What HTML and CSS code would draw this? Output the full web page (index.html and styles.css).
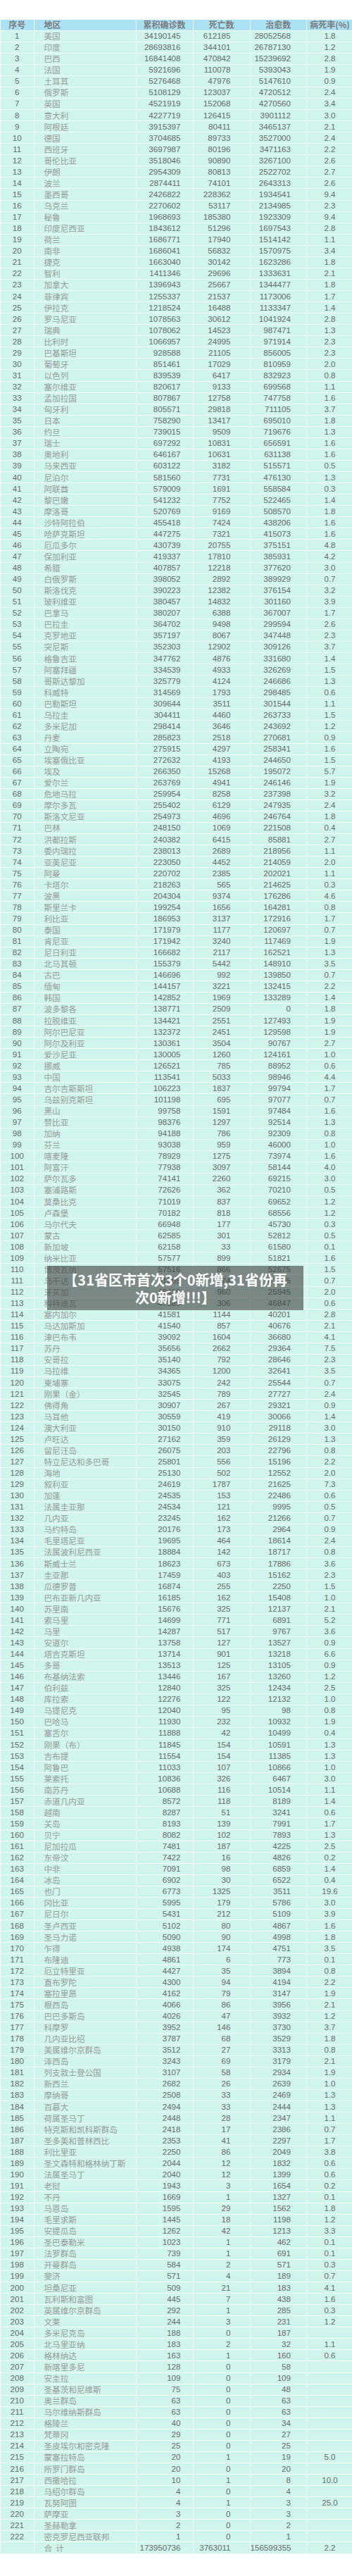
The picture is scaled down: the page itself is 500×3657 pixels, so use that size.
FILE: index.html
```html
<!DOCTYPE html>
<html lang="zh-CN">
<head>
<meta charset="utf-8">
<title>全球疫情统计</title>
<link rel="stylesheet" href="styles.css">
</head>
<body>
<div class="page">
<table class="stats">
<colgroup><col class="c-no"><col class="c-area"><col class="c-num"><col class="c-num"><col class="c-rec"><col class="c-rate"></colgroup>
<thead>
<tr><th>序号</th><th>地区</th><th>累积确诊数</th><th>死亡数</th><th>治愈数</th><th>病死率(%)</th></tr>
</thead>
<tbody>
<tr><td>1</td><td>美国</td><td>34190145</td><td>612185</td><td>28052568</td><td>1.8</td></tr>
<tr><td>2</td><td>印度</td><td>28693816</td><td>344101</td><td>26787130</td><td>1.2</td></tr>
<tr><td>3</td><td>巴西</td><td>16841408</td><td>470842</td><td>15239692</td><td>2.8</td></tr>
<tr><td>4</td><td>法国</td><td>5921696</td><td>110078</td><td>5393043</td><td>1.9</td></tr>
<tr><td>5</td><td>土耳其</td><td>5276468</td><td>47976</td><td>5147610</td><td>0.9</td></tr>
<tr><td>6</td><td>俄罗斯</td><td>5108129</td><td>123037</td><td>4720512</td><td>2.4</td></tr>
<tr><td>7</td><td>英国</td><td>4521919</td><td>152068</td><td>4270560</td><td>3.4</td></tr>
<tr><td>8</td><td>意大利</td><td>4227719</td><td>126415</td><td>3901112</td><td>3.0</td></tr>
<tr><td>9</td><td>阿根廷</td><td>3915397</td><td>80411</td><td>3465137</td><td>2.1</td></tr>
<tr><td>10</td><td>德国</td><td>3704685</td><td>89733</td><td>3527000</td><td>2.4</td></tr>
<tr><td>11</td><td>西班牙</td><td>3697987</td><td>80196</td><td>3471163</td><td>2.2</td></tr>
<tr><td>12</td><td>哥伦比亚</td><td>3518046</td><td>90890</td><td>3267100</td><td>2.6</td></tr>
<tr><td>13</td><td>伊朗</td><td>2954309</td><td>80813</td><td>2522702</td><td>2.7</td></tr>
<tr><td>14</td><td>波兰</td><td>2874411</td><td>74101</td><td>2643313</td><td>2.6</td></tr>
<tr><td>15</td><td>墨西哥</td><td>2426822</td><td>228362</td><td>1934541</td><td>9.4</td></tr>
<tr><td>16</td><td>乌克兰</td><td>2270602</td><td>53117</td><td>2134985</td><td>2.3</td></tr>
<tr><td>17</td><td>秘鲁</td><td>1968693</td><td>185380</td><td>1923309</td><td>9.4</td></tr>
<tr><td>18</td><td>印度尼西亚</td><td>1843612</td><td>51296</td><td>1697543</td><td>2.8</td></tr>
<tr><td>19</td><td>荷兰</td><td>1686771</td><td>17940</td><td>1514142</td><td>1.1</td></tr>
<tr><td>20</td><td>南非</td><td>1686041</td><td>56832</td><td>1570975</td><td>3.4</td></tr>
<tr><td>21</td><td>捷克</td><td>1663040</td><td>30142</td><td>1623286</td><td>1.8</td></tr>
<tr><td>22</td><td>智利</td><td>1411346</td><td>29696</td><td>1333631</td><td>2.1</td></tr>
<tr><td>23</td><td>加拿大</td><td>1396943</td><td>25667</td><td>1344477</td><td>1.8</td></tr>
<tr><td>24</td><td>菲律宾</td><td>1255337</td><td>21537</td><td>1173006</td><td>1.7</td></tr>
<tr><td>25</td><td>伊拉克</td><td>1218524</td><td>16488</td><td>1133347</td><td>1.4</td></tr>
<tr><td>26</td><td>罗马尼亚</td><td>1078563</td><td>30612</td><td>1041924</td><td>2.8</td></tr>
<tr><td>27</td><td>瑞典</td><td>1078062</td><td>14523</td><td>987471</td><td>1.3</td></tr>
<tr><td>28</td><td>比利时</td><td>1066957</td><td>24995</td><td>971914</td><td>2.3</td></tr>
<tr><td>29</td><td>巴基斯坦</td><td>928588</td><td>21105</td><td>856005</td><td>2.3</td></tr>
<tr><td>30</td><td>葡萄牙</td><td>851461</td><td>17029</td><td>810959</td><td>2.0</td></tr>
<tr><td>31</td><td>以色列</td><td>839539</td><td>6417</td><td>832923</td><td>0.8</td></tr>
<tr><td>32</td><td>塞尔维亚</td><td>820617</td><td>9133</td><td>699568</td><td>1.1</td></tr>
<tr><td>33</td><td>孟加拉国</td><td>807867</td><td>12758</td><td>747758</td><td>1.6</td></tr>
<tr><td>34</td><td>匈牙利</td><td>805571</td><td>29818</td><td>711105</td><td>3.7</td></tr>
<tr><td>35</td><td>日本</td><td>758290</td><td>13417</td><td>695010</td><td>1.8</td></tr>
<tr><td>36</td><td>约旦</td><td>739015</td><td>9509</td><td>719676</td><td>1.3</td></tr>
<tr><td>37</td><td>瑞士</td><td>697292</td><td>10831</td><td>656591</td><td>1.6</td></tr>
<tr><td>38</td><td>奥地利</td><td>646167</td><td>10631</td><td>631138</td><td>1.6</td></tr>
<tr><td>39</td><td>马来西亚</td><td>603122</td><td>3182</td><td>515571</td><td>0.5</td></tr>
<tr><td>40</td><td>尼泊尔</td><td>581560</td><td>7731</td><td>476130</td><td>1.3</td></tr>
<tr><td>41</td><td>阿联酋</td><td>579009</td><td>1691</td><td>558584</td><td>0.3</td></tr>
<tr><td>42</td><td>黎巴嫩</td><td>541232</td><td>7752</td><td>522465</td><td>1.4</td></tr>
<tr><td>43</td><td>摩洛哥</td><td>520769</td><td>9169</td><td>508570</td><td>1.8</td></tr>
<tr><td>44</td><td>沙特阿拉伯</td><td>455418</td><td>7424</td><td>438206</td><td>1.6</td></tr>
<tr><td>45</td><td>哈萨克斯坦</td><td>447275</td><td>7321</td><td>415073</td><td>1.6</td></tr>
<tr><td>46</td><td>厄瓜多尔</td><td>430739</td><td>20755</td><td>375151</td><td>4.8</td></tr>
<tr><td>47</td><td>保加利亚</td><td>419337</td><td>17810</td><td>385931</td><td>4.2</td></tr>
<tr><td>48</td><td>希腊</td><td>407857</td><td>12218</td><td>377620</td><td>3.0</td></tr>
<tr><td>49</td><td>白俄罗斯</td><td>398052</td><td>2892</td><td>389929</td><td>0.7</td></tr>
<tr><td>50</td><td>斯洛伐克</td><td>390223</td><td>12382</td><td>376154</td><td>3.2</td></tr>
<tr><td>51</td><td>玻利维亚</td><td>380457</td><td>14832</td><td>301160</td><td>3.9</td></tr>
<tr><td>52</td><td>巴拿马</td><td>380207</td><td>6388</td><td>367007</td><td>1.7</td></tr>
<tr><td>53</td><td>巴拉圭</td><td>364702</td><td>9498</td><td>299594</td><td>2.6</td></tr>
<tr><td>54</td><td>克罗地亚</td><td>357197</td><td>8067</td><td>347448</td><td>2.3</td></tr>
<tr><td>55</td><td>突尼斯</td><td>352303</td><td>12902</td><td>309126</td><td>3.7</td></tr>
<tr><td>56</td><td>格鲁吉亚</td><td>347762</td><td>4876</td><td>331680</td><td>1.4</td></tr>
<tr><td>57</td><td>阿塞拜疆</td><td>334539</td><td>4933</td><td>326269</td><td>1.5</td></tr>
<tr><td>58</td><td>哥斯达黎加</td><td>325779</td><td>4124</td><td>246686</td><td>1.3</td></tr>
<tr><td>59</td><td>科威特</td><td>314569</td><td>1793</td><td>298485</td><td>0.6</td></tr>
<tr><td>60</td><td>巴勒斯坦</td><td>309644</td><td>3511</td><td>301544</td><td>1.1</td></tr>
<tr><td>61</td><td>乌拉圭</td><td>304411</td><td>4460</td><td>263733</td><td>1.5</td></tr>
<tr><td>62</td><td>多米尼加</td><td>298414</td><td>3646</td><td>243692</td><td>1.2</td></tr>
<tr><td>63</td><td>丹麦</td><td>285823</td><td>2518</td><td>270681</td><td>0.9</td></tr>
<tr><td>64</td><td>立陶宛</td><td>275915</td><td>4297</td><td>258341</td><td>1.6</td></tr>
<tr><td>65</td><td>埃塞俄比亚</td><td>272632</td><td>4193</td><td>244650</td><td>1.5</td></tr>
<tr><td>66</td><td>埃及</td><td>266350</td><td>15268</td><td>195072</td><td>5.7</td></tr>
<tr><td>67</td><td>爱尔兰</td><td>263769</td><td>4941</td><td>246146</td><td>1.9</td></tr>
<tr><td>68</td><td>危地马拉</td><td>259954</td><td>8258</td><td>237398</td><td>3.2</td></tr>
<tr><td>69</td><td>摩尔多瓦</td><td>255402</td><td>6129</td><td>247935</td><td>2.4</td></tr>
<tr><td>70</td><td>斯洛文尼亚</td><td>254973</td><td>4696</td><td>246764</td><td>1.8</td></tr>
<tr><td>71</td><td>巴林</td><td>248150</td><td>1069</td><td>221508</td><td>0.4</td></tr>
<tr><td>72</td><td>洪都拉斯</td><td>240382</td><td>6415</td><td>85881</td><td>2.7</td></tr>
<tr><td>73</td><td>委内瑞拉</td><td>238013</td><td>2689</td><td>218956</td><td>1.1</td></tr>
<tr><td>74</td><td>亚美尼亚</td><td>223050</td><td>4452</td><td>214059</td><td>2.0</td></tr>
<tr><td>75</td><td>阿曼</td><td>220702</td><td>2385</td><td>202021</td><td>1.1</td></tr>
<tr><td>76</td><td>卡塔尔</td><td>218263</td><td>565</td><td>214625</td><td>0.3</td></tr>
<tr><td>77</td><td>波黑</td><td>204304</td><td>9374</td><td>176286</td><td>4.6</td></tr>
<tr><td>78</td><td>斯里兰卡</td><td>199254</td><td>1656</td><td>164281</td><td>0.8</td></tr>
<tr><td>79</td><td>利比亚</td><td>186953</td><td>3137</td><td>172916</td><td>1.7</td></tr>
<tr><td>80</td><td>泰国</td><td>171979</td><td>1177</td><td>120697</td><td>0.7</td></tr>
<tr><td>81</td><td>肯尼亚</td><td>171942</td><td>3240</td><td>117469</td><td>1.9</td></tr>
<tr><td>82</td><td>尼日利亚</td><td>166682</td><td>2117</td><td>162521</td><td>1.3</td></tr>
<tr><td>83</td><td>北马其顿</td><td>155379</td><td>5442</td><td>148910</td><td>3.5</td></tr>
<tr><td>84</td><td>古巴</td><td>146696</td><td>992</td><td>139850</td><td>0.7</td></tr>
<tr><td>85</td><td>缅甸</td><td>144157</td><td>3221</td><td>132415</td><td>2.2</td></tr>
<tr><td>86</td><td>韩国</td><td>142852</td><td>1969</td><td>133289</td><td>1.4</td></tr>
<tr><td>87</td><td>波多黎各</td><td>138771</td><td>2509</td><td>0</td><td>1.8</td></tr>
<tr><td>88</td><td>拉脱维亚</td><td>134421</td><td>2551</td><td>127493</td><td>1.9</td></tr>
<tr><td>89</td><td>阿尔巴尼亚</td><td>132372</td><td>2451</td><td>129598</td><td>1.9</td></tr>
<tr><td>90</td><td>阿尔及利亚</td><td>130361</td><td>3504</td><td>90767</td><td>2.7</td></tr>
<tr><td>91</td><td>爱沙尼亚</td><td>130005</td><td>1260</td><td>124161</td><td>1.0</td></tr>
<tr><td>92</td><td>挪威</td><td>126521</td><td>785</td><td>88952</td><td>0.6</td></tr>
<tr><td>93</td><td>中国</td><td>113541</td><td>5033</td><td>98946</td><td>4.4</td></tr>
<tr><td>94</td><td>吉尔吉斯斯坦</td><td>106223</td><td>1837</td><td>99794</td><td>1.7</td></tr>
<tr><td>95</td><td>乌兹别克斯坦</td><td>101198</td><td>695</td><td>97077</td><td>0.7</td></tr>
<tr><td>96</td><td>黑山</td><td>99758</td><td>1591</td><td>97484</td><td>1.6</td></tr>
<tr><td>97</td><td>赞比亚</td><td>98376</td><td>1297</td><td>92514</td><td>1.3</td></tr>
<tr><td>98</td><td>加纳</td><td>94188</td><td>786</td><td>92309</td><td>0.8</td></tr>
<tr><td>99</td><td>芬兰</td><td>93038</td><td>959</td><td>46000</td><td>1.0</td></tr>
<tr><td>100</td><td>喀麦隆</td><td>78929</td><td>1275</td><td>73974</td><td>1.6</td></tr>
<tr><td>101</td><td>阿富汗</td><td>77938</td><td>3097</td><td>58144</td><td>4.0</td></tr>
<tr><td>102</td><td>萨尔瓦多</td><td>74141</td><td>2260</td><td>69215</td><td>3.0</td></tr>
<tr><td>103</td><td>塞浦路斯</td><td>72626</td><td>362</td><td>70210</td><td>0.5</td></tr>
<tr><td>104</td><td>莫桑比克</td><td>71019</td><td>837</td><td>69652</td><td>1.2</td></tr>
<tr><td>105</td><td>卢森堡</td><td>70182</td><td>818</td><td>68556</td><td>1.2</td></tr>
<tr><td>106</td><td>马尔代夫</td><td>66948</td><td>177</td><td>45730</td><td>0.3</td></tr>
<tr><td>107</td><td>蒙古</td><td>62585</td><td>301</td><td>52812</td><td>0.5</td></tr>
<tr><td>108</td><td>新加坡</td><td>62158</td><td>33</td><td>61580</td><td>0.1</td></tr>
<tr><td>109</td><td>纳米比亚</td><td>57577</td><td>899</td><td>51821</td><td>1.6</td></tr>
<tr><td>110</td><td>博茨瓦纳</td><td>57516</td><td>866</td><td>52675</td><td>1.5</td></tr>
<tr><td>111</td><td>乌干达</td><td>51005</td><td>374</td><td>47765</td><td>0.7</td></tr>
<tr><td>112</td><td>牙买加</td><td>48419</td><td>960</td><td>25945</td><td>2.0</td></tr>
<tr><td>113</td><td>科特迪瓦</td><td>47389</td><td>306</td><td>46847</td><td>0.6</td></tr>
<tr><td>114</td><td>塞内加尔</td><td>41581</td><td>1144</td><td>40201</td><td>2.8</td></tr>
<tr><td>115</td><td>马达加斯加</td><td>41540</td><td>857</td><td>40676</td><td>2.1</td></tr>
<tr><td>116</td><td>津巴布韦</td><td>39092</td><td>1604</td><td>36680</td><td>4.1</td></tr>
<tr><td>117</td><td>苏丹</td><td>35656</td><td>2662</td><td>29364</td><td>7.5</td></tr>
<tr><td>118</td><td>安哥拉</td><td>35140</td><td>792</td><td>28646</td><td>2.3</td></tr>
<tr><td>119</td><td>马拉维</td><td>34365</td><td>1200</td><td>32641</td><td>3.5</td></tr>
<tr><td>120</td><td>柬埔寨</td><td>33075</td><td>242</td><td>25544</td><td>0.7</td></tr>
<tr><td>121</td><td>刚果（金）</td><td>32545</td><td>789</td><td>27727</td><td>2.4</td></tr>
<tr><td>122</td><td>佛得角</td><td>30907</td><td>267</td><td>29321</td><td>0.9</td></tr>
<tr><td>123</td><td>马耳他</td><td>30559</td><td>419</td><td>30066</td><td>1.4</td></tr>
<tr><td>124</td><td>澳大利亚</td><td>30150</td><td>910</td><td>29118</td><td>3.0</td></tr>
<tr><td>125</td><td>卢旺达</td><td>27162</td><td>359</td><td>26129</td><td>1.3</td></tr>
<tr><td>126</td><td>留尼汪岛</td><td>26075</td><td>203</td><td>22796</td><td>0.8</td></tr>
<tr><td>127</td><td>特立尼达和多巴哥</td><td>25801</td><td>556</td><td>15196</td><td>2.2</td></tr>
<tr><td>128</td><td>海地</td><td>25130</td><td>502</td><td>12552</td><td>2.0</td></tr>
<tr><td>129</td><td>叙利亚</td><td>24619</td><td>1787</td><td>21625</td><td>7.3</td></tr>
<tr><td>130</td><td>加蓬</td><td>24535</td><td>153</td><td>22486</td><td>0.6</td></tr>
<tr><td>131</td><td>法属圭亚那</td><td>24534</td><td>121</td><td>9995</td><td>0.5</td></tr>
<tr><td>132</td><td>几内亚</td><td>23245</td><td>162</td><td>21266</td><td>0.7</td></tr>
<tr><td>133</td><td>马约特岛</td><td>20176</td><td>173</td><td>2964</td><td>0.9</td></tr>
<tr><td>134</td><td>毛里塔尼亚</td><td>19695</td><td>464</td><td>18614</td><td>2.4</td></tr>
<tr><td>135</td><td>法属波利尼西亚</td><td>18884</td><td>142</td><td>18717</td><td>0.8</td></tr>
<tr><td>136</td><td>斯威士兰</td><td>18623</td><td>673</td><td>17886</td><td>3.6</td></tr>
<tr><td>137</td><td>圭亚那</td><td>17459</td><td>403</td><td>15162</td><td>2.3</td></tr>
<tr><td>138</td><td>瓜德罗普</td><td>16874</td><td>255</td><td>2250</td><td>1.5</td></tr>
<tr><td>139</td><td>巴布亚新几内亚</td><td>16185</td><td>162</td><td>15408</td><td>1.0</td></tr>
<tr><td>140</td><td>苏里南</td><td>15676</td><td>325</td><td>12137</td><td>2.1</td></tr>
<tr><td>141</td><td>索马里</td><td>14699</td><td>771</td><td>6891</td><td>5.2</td></tr>
<tr><td>142</td><td>马里</td><td>14287</td><td>517</td><td>9767</td><td>3.6</td></tr>
<tr><td>143</td><td>安道尔</td><td>13758</td><td>127</td><td>13527</td><td>0.9</td></tr>
<tr><td>144</td><td>塔吉克斯坦</td><td>13714</td><td>901</td><td>13218</td><td>6.6</td></tr>
<tr><td>145</td><td>多哥</td><td>13513</td><td>125</td><td>13105</td><td>0.9</td></tr>
<tr><td>146</td><td>布基纳法索</td><td>13446</td><td>167</td><td>13260</td><td>1.2</td></tr>
<tr><td>147</td><td>伯利兹</td><td>12840</td><td>325</td><td>12434</td><td>2.5</td></tr>
<tr><td>148</td><td>库拉索</td><td>12276</td><td>122</td><td>12132</td><td>1.0</td></tr>
<tr><td>149</td><td>马提尼克</td><td>12040</td><td>95</td><td>98</td><td>0.8</td></tr>
<tr><td>150</td><td>巴哈马</td><td>11930</td><td>232</td><td>10932</td><td>1.9</td></tr>
<tr><td>151</td><td>塞舌尔</td><td>11888</td><td>42</td><td>10499</td><td>0.4</td></tr>
<tr><td>152</td><td>刚果（布）</td><td>11845</td><td>154</td><td>10591</td><td>1.3</td></tr>
<tr><td>153</td><td>吉布提</td><td>11554</td><td>154</td><td>11385</td><td>1.3</td></tr>
<tr><td>154</td><td>阿鲁巴</td><td>11033</td><td>107</td><td>10866</td><td>1.0</td></tr>
<tr><td>155</td><td>莱索托</td><td>10836</td><td>326</td><td>6467</td><td>3.0</td></tr>
<tr><td>156</td><td>南苏丹</td><td>10688</td><td>116</td><td>10514</td><td>1.1</td></tr>
<tr><td>157</td><td>赤道几内亚</td><td>8572</td><td>118</td><td>8189</td><td>1.4</td></tr>
<tr><td>158</td><td>越南</td><td>8287</td><td>51</td><td>3241</td><td>0.6</td></tr>
<tr><td>159</td><td>关岛</td><td>8193</td><td>139</td><td>7991</td><td>1.7</td></tr>
<tr><td>160</td><td>贝宁</td><td>8082</td><td>102</td><td>7893</td><td>1.3</td></tr>
<tr><td>161</td><td>尼加拉瓜</td><td>7481</td><td>187</td><td>4225</td><td>2.5</td></tr>
<tr><td>162</td><td>东帝汶</td><td>7422</td><td>16</td><td>4826</td><td>0.2</td></tr>
<tr><td>163</td><td>中非</td><td>7091</td><td>98</td><td>6859</td><td>1.4</td></tr>
<tr><td>164</td><td>冰岛</td><td>6902</td><td>30</td><td>6522</td><td>0.4</td></tr>
<tr><td>165</td><td>也门</td><td>6773</td><td>1325</td><td>3511</td><td>19.6</td></tr>
<tr><td>166</td><td>冈比亚</td><td>5995</td><td>179</td><td>5786</td><td>3.0</td></tr>
<tr><td>167</td><td>尼日尔</td><td>5431</td><td>212</td><td>5109</td><td>3.9</td></tr>
<tr><td>168</td><td>圣卢西亚</td><td>5102</td><td>80</td><td>4867</td><td>1.6</td></tr>
<tr><td>169</td><td>圣马力诺</td><td>5090</td><td>90</td><td>4998</td><td>1.8</td></tr>
<tr><td>170</td><td>乍得</td><td>4938</td><td>174</td><td>4751</td><td>3.5</td></tr>
<tr><td>171</td><td>布隆迪</td><td>4861</td><td>6</td><td>773</td><td>0.1</td></tr>
<tr><td>172</td><td>厄立特里亚</td><td>4427</td><td>35</td><td>3894</td><td>0.8</td></tr>
<tr><td>173</td><td>直布罗陀</td><td>4300</td><td>94</td><td>4194</td><td>2.2</td></tr>
<tr><td>174</td><td>塞拉里昂</td><td>4162</td><td>79</td><td>3147</td><td>1.9</td></tr>
<tr><td>175</td><td>根西岛</td><td>4066</td><td>86</td><td>3956</td><td>2.1</td></tr>
<tr><td>176</td><td>巴巴多斯岛</td><td>4026</td><td>47</td><td>3932</td><td>1.2</td></tr>
<tr><td>177</td><td>科摩罗</td><td>3952</td><td>146</td><td>3730</td><td>3.7</td></tr>
<tr><td>178</td><td>几内亚比绍</td><td>3787</td><td>68</td><td>3529</td><td>1.8</td></tr>
<tr><td>179</td><td>美属维尔京群岛</td><td>3512</td><td>27</td><td>3313</td><td>0.8</td></tr>
<tr><td>180</td><td>泽西岛</td><td>3243</td><td>69</td><td>3179</td><td>2.1</td></tr>
<tr><td>181</td><td>列支敦士登公国</td><td>3107</td><td>58</td><td>2934</td><td>1.9</td></tr>
<tr><td>182</td><td>新西兰</td><td>2682</td><td>26</td><td>2639</td><td>1.0</td></tr>
<tr><td>183</td><td>摩纳哥</td><td>2508</td><td>33</td><td>2469</td><td>1.3</td></tr>
<tr><td>184</td><td>百慕大</td><td>2494</td><td>33</td><td>2444</td><td>1.3</td></tr>
<tr><td>185</td><td>荷属圣马丁</td><td>2448</td><td>28</td><td>2347</td><td>1.1</td></tr>
<tr><td>186</td><td>特克斯和凯科斯群岛</td><td>2418</td><td>17</td><td>2386</td><td>0.7</td></tr>
<tr><td>187</td><td>圣多美和普林西比</td><td>2353</td><td>41</td><td>2297</td><td>1.7</td></tr>
<tr><td>188</td><td>利比里亚</td><td>2250</td><td>86</td><td>2049</td><td>3.8</td></tr>
<tr><td>189</td><td>圣文森特和格林纳丁斯</td><td>2044</td><td>12</td><td>1832</td><td>0.6</td></tr>
<tr><td>190</td><td>法属圣马丁</td><td>2040</td><td>12</td><td>1399</td><td>0.6</td></tr>
<tr><td>191</td><td>老挝</td><td>1943</td><td>3</td><td>1654</td><td>0.2</td></tr>
<tr><td>192</td><td>不丹</td><td>1669</td><td>1</td><td>1327</td><td>0.1</td></tr>
<tr><td>193</td><td>马恩岛</td><td>1595</td><td>29</td><td>1562</td><td>1.8</td></tr>
<tr><td>194</td><td>毛里求斯</td><td>1445</td><td>18</td><td>1198</td><td>1.2</td></tr>
<tr><td>195</td><td>安提瓜岛</td><td>1262</td><td>42</td><td>1213</td><td>3.3</td></tr>
<tr><td>196</td><td>圣巴泰勒米</td><td>1023</td><td>1</td><td>462</td><td>0.1</td></tr>
<tr><td>197</td><td>法罗群岛</td><td>739</td><td>1</td><td>691</td><td>0.1</td></tr>
<tr><td>198</td><td>开曼群岛</td><td>584</td><td>2</td><td>571</td><td>0.3</td></tr>
<tr><td>199</td><td>斐济</td><td>571</td><td>4</td><td>189</td><td>0.7</td></tr>
<tr><td>200</td><td>坦桑尼亚</td><td>509</td><td>21</td><td>183</td><td>4.1</td></tr>
<tr><td>201</td><td>瓦利斯和富图</td><td>445</td><td>7</td><td>438</td><td>1.6</td></tr>
<tr><td>202</td><td>英属维尔京群岛</td><td>292</td><td>1</td><td>285</td><td>0.3</td></tr>
<tr><td>203</td><td>文莱</td><td>244</td><td>3</td><td>231</td><td>1.2</td></tr>
<tr><td>204</td><td>多米尼克岛</td><td>188</td><td>0</td><td>187</td><td></td></tr>
<tr><td>205</td><td>北马里亚纳</td><td>183</td><td>2</td><td>32</td><td>1.1</td></tr>
<tr><td>206</td><td>格林纳达</td><td>163</td><td>1</td><td>160</td><td>0.6</td></tr>
<tr><td>207</td><td>新喀里多尼</td><td>128</td><td>0</td><td>58</td><td></td></tr>
<tr><td>208</td><td>安圭拉</td><td>109</td><td>0</td><td>109</td><td></td></tr>
<tr><td>209</td><td>圣基茨和尼维斯</td><td>75</td><td>0</td><td>48</td><td></td></tr>
<tr><td>210</td><td>奥兰群岛</td><td>63</td><td>0</td><td>63</td><td></td></tr>
<tr><td>211</td><td>马尔维纳斯群岛</td><td>63</td><td>0</td><td>63</td><td></td></tr>
<tr><td>212</td><td>格陵兰</td><td>40</td><td>0</td><td>34</td><td></td></tr>
<tr><td>213</td><td>梵蒂冈</td><td>29</td><td>0</td><td>27</td><td></td></tr>
<tr><td>214</td><td>圣皮埃尔和密克隆</td><td>25</td><td>0</td><td>25</td><td></td></tr>
<tr><td>215</td><td>蒙塞拉特岛</td><td>20</td><td>1</td><td>19</td><td>5.0</td></tr>
<tr><td>216</td><td>所罗门群岛</td><td>20</td><td>0</td><td>20</td><td></td></tr>
<tr><td>217</td><td>西撒哈拉</td><td>10</td><td>1</td><td>8</td><td>10.0</td></tr>
<tr><td>218</td><td>马绍尔群岛</td><td>4</td><td>0</td><td>4</td><td></td></tr>
<tr><td>219</td><td>瓦努阿图</td><td>4</td><td>1</td><td>3</td><td>25.0</td></tr>
<tr><td>220</td><td>萨摩亚</td><td>3</td><td>0</td><td>3</td><td></td></tr>
<tr><td>221</td><td>圣赫勒拿</td><td>2</td><td>0</td><td>2</td><td></td></tr>
<tr><td>222</td><td>密克罗尼西亚联邦</td><td>1</td><td>0</td><td>1</td><td></td></tr>
<tr class="total"><td></td><td>合&nbsp;&nbsp;计</td><td>173950736</td><td>3763011</td><td>156599355</td><td>2.2</td></tr>
</tbody>
</table>
</div>
<div class="headline">【31省区市首次3个0新增,31省份再<br>次0新增!!!】</div>
</body>
</html>
```

FILE: styles.css
```css
html, body {
  margin: 0;
  padding: 0;
  background: #ffffff;
}

body {
  position: relative;
  width: 500px;
  min-height: 3657px;
}

.page {
  padding: 27.5px 0 0 1px;
}

.stats {
  border-collapse: separate;
  border-spacing: 0;
  table-layout: fixed;
  width: 499px;
  background: #cff5ec;
}

.c-no { width: 47.5px; }
.c-area { width: 145px; }
.c-num { width: 81px; }
.c-rec { width: 80.5px; }
.c-rate { width: 65px; }

.stats tr {
  height: 16.076px;
}

.stats th,
.stats td {
  padding: 0;
  border-right: 1px solid #f3fdfa;
  border-bottom: 1px solid #f3fdfa;
  white-space: nowrap;
  overflow: hidden;
  line-height: 14px;
  vertical-align: middle;
}

.stats th:last-child,
.stats td:last-child {
  border-right: none;
}

.stats thead th {
  background: #aae2f3;
  font-family: "Noto Sans CJK SC", sans-serif;
  font-weight: 700;
  font-size: 12px;
  color: #7c7c7c;
  text-align: center;
}

.stats thead th:nth-child(2) {
  text-align: left;
  padding-left: 14px;
}

.stats td {
  font-family: "Liberation Sans", Arial, sans-serif;
  font-size: 11.6px;
  color: #6a6a6a;
}

.stats td:nth-child(1) {
  text-align: center;
}

.stats td:nth-child(2) {
  text-align: left;
  padding-left: 14px;
  font-family: "Noto Sans CJK SC", sans-serif;
  font-size: 11.6px;
  color: #9b9b9b;
}

.stats td:nth-child(3) {
  text-align: right;
  padding-right: 17px;
}

.stats td:nth-child(4) {
  text-align: right;
  padding-right: 27px;
}

.stats td:nth-child(5) {
  text-align: right;
  padding-right: 22px;
}

.stats td:nth-child(6) {
  text-align: center;
}

.headline {
  position: absolute;
  left: 67px;
  top: 1797px;
  width: 364px;
  height: 63px;
  box-sizing: border-box;
  padding: 7px 0 6px;
  background: rgba(64, 64, 64, 0.6);
  color: #ffffff;
  font-family: "Noto Sans CJK SC", sans-serif;
  font-weight: 700;
  font-size: 20px;
  line-height: 25px;
  text-align: center;
  white-space: nowrap;
}
```
